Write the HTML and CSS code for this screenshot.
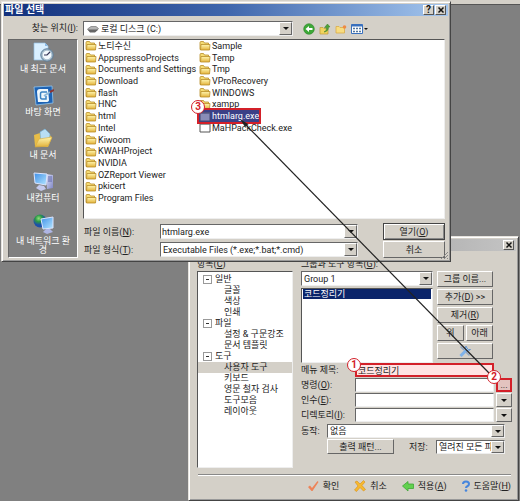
FILE: index.html
```html
<!DOCTYPE html>
<html lang="ko">
<head>
<meta charset="utf-8">
<title>파일 선택</title>
<link rel="stylesheet" href="styles.css">
</head>
<body>
<svg class="defs" aria-hidden="true">
  <defs>
    <linearGradient id="gold" x2="0" y2="1"><stop offset="0" stop-color="#fff6b0"/><stop offset="1" stop-color="#e3b23a"/></linearGradient>
    <linearGradient id="screen" x2="1" y2="1"><stop offset="0" stop-color="#3d8fe8"/><stop offset="1" stop-color="#b5e6ff"/></linearGradient>
    <linearGradient id="case" x2="1" y2="1"><stop offset="0" stop-color="#dfe3fb"/><stop offset="1" stop-color="#7f86c4"/></linearGradient>
    <radialGradient id="globe" cx=".4" cy=".3"><stop offset="0" stop-color="#8fe07a"/><stop offset=".5" stop-color="#2c9a45"/><stop offset="1" stop-color="#1c4fa8"/></radialGradient>
    <symbol id="folder" viewBox="0 0 12 11"><path d="M1 9.500V2.500Q1 1.500 2 1.500H4.500L5.500 3H9.500V9.500Z" fill="#f5dc74" stroke="#b98d28" stroke-width=".8"/><path d="M1.500 10L2 4.500H11L10.500 10Z" fill="url(#gold)" stroke="#b98d28" stroke-width=".8"/></symbol>
    <symbol id="app" viewBox="0 0 12 11"><path d="M1 1.500H11V10H1Z" fill="#fff" stroke="#555"/><path d="M1 2H11" stroke="#777" stroke-width="1.500"/></symbol>
  </defs>
</svg>
<main class="desktop">
  <div class="app-bar"></div>

  <section class="window options">
    <header class="titlebar inactive"><span></span><button class="cap" aria-label="닫기"><svg viewBox="0 0 8 8"><path d="M1.500 1.500L6.500 6.500M6.500 1.500L1.500 6.500"/></svg></button></header>
    <div class="options-body">
      <div class="categories">
        <div class="caption">항목(<u>C</u>)</div>
        <ul class="tree">
          <li class="branch">일반</li><li>글꼴</li><li>색상</li><li>인쇄</li>
          <li class="branch">파일</li><li>설정 &amp; 구문강조</li><li>문서 템플릿</li>
          <li class="branch">도구</li><li class="current">사용자 도구</li><li>키보드</li><li>영문 철자 검사</li><li>도구모음</li><li>레이아웃</li>
        </ul>
      </div>
      <div class="settings">
        <label class="caption" for="group">그룹과 도구 항목(<u>G</u>):</label>
        <div class="group-area">
          <div class="group-list">
            <div class="combo"><select id="group"><option>Group 1</option></select></div>
            <ul class="tools"><li>코드정리기</li></ul>
          </div>
          <div class="group-buttons">
            <button>그룹 이름...</button>
            <button>추가(<u>D</u>) &gt;&gt;</button>
            <button>제거(<u>R</u>)</button>
            <button class="half">위</button><button class="half">아래</button>
            <button aria-label="도구 설정"><svg class="wrench" viewBox="0 0 12 12"><path d="M1.500 11L7.500 5" stroke="#7fb2ea" stroke-width="3"/><path d="M7 1Q5 3.500 7 5.500Q9.500 7 11.500 4.500L9.500 4.500L8 3Z" fill="#a8cff5" stroke="#4c84c8" stroke-width=".7"/><path d="M1.500 1.500L5 5M7 7L10.500 10.500" stroke="#8fa6c2" stroke-width="1.500"/></svg></button>
          </div>
        </div>
        <div class="fields">
          <label for="menu">메뉴 제목:</label><input id="menu" class="marked" value="코드정리기">
          <label for="cmd">명령(<u>O</u>):</label><input id="cmd"><button class="marked-button" aria-label="명령 찾기">...</button>
          <label for="arg">인수(<u>E</u>):</label><input id="arg"><button class="drop" aria-label="인수 선택"></button>
          <label for="dir">디렉토리(<u>I</u>):</label><input id="dir"><button class="drop" aria-label="디렉토리 선택"></button>
        </div>
        <div class="line">
          <label for="action">동작:</label><div class="combo"><select id="action"><option>없음</option></select></div>
        </div>
        <div class="line output">
          <button>출력 패턴...</button><label for="save">저장:</label><div class="combo"><select id="save"><option>열려진 모든 파일</option></select></div>
        </div>
      </div>
    </div>
    <footer class="actions">
      <button><svg viewBox="0 0 12 12"><path d="M1 7L3 5.500L5 8L10.500 1L11.500 2L5.500 11H4.500Z" fill="#ee8358"/></svg><span>확인</span></button>
      <button><svg viewBox="0 0 12 12"><path d="M1 2L3 1L6 4L9.500 .500L11 2L8 5.500L11.500 9.500L9.500 11L6 7.500L2.500 11.500L.500 10L4 6Z" fill="#f6b92f" stroke="#d98d18" stroke-width=".6"/></svg><span>취소</span></button>
      <button><svg viewBox="0 0 12 12"><path d="M.500 6L6 1.500V4H11.500V8.500H6V11Z" fill="#62d14f" stroke="#3fa637" stroke-width=".8"/></svg><span>적용(<u>A</u>)</span></button>
      <button><svg class="narrow" viewBox="2 0 8 12"><path d="M3 4Q3 1.500 6 1.500T9 4Q9 5.500 7 6.500Q6 7 6 8" fill="none" stroke="#4786dd" stroke-width="2"/><circle cx="6" cy="10.500" r="1.300" fill="#4786dd"/></svg><span>도움말(<u>H</u>)</span></button>
    </footer>
  </section>

  <section class="window picker">
    <header class="titlebar"><span>파일 선택</span><button class="cap" aria-label="도움말">?</button><button class="cap" aria-label="닫기"><svg viewBox="0 0 8 8"><path d="M1.500 1.500L6.500 6.500M6.500 1.500L1.500 6.500"/></svg></button></header>
    <div class="picker-body">
      <label class="look-label" for="look">찾는 위치(<u>I</u>):</label>
      <div class="look">
        <div class="combo drive"><svg viewBox="0 0 12 8"><path d="M.500 4L4 1.500H9L11.500 3.500L8 6.500H3Z" fill="#b5b5b5" stroke="#777" stroke-width=".7"/><path d="M.500 4.500L3 7.500H8L11.500 4.500" fill="#666"/></svg><select id="look"><option>로컬 디스크 (C:)</option></select></div>
        <div class="nav">
          <button aria-label="뒤로"><svg viewBox="0 0 12 12"><circle cx="6" cy="6" r="5.300" fill="#3da837" stroke="#2c8528" stroke-width=".6"/><path d="M2.500 6L6 3V5H9.500V7H6V9Z" fill="#fff"/></svg></button>
          <button aria-label="한 수준 위로"><svg viewBox="0 0 12 12"><path d="M1 4.500H4L5 5.500H9V11H1Z" fill="#f1d45e" stroke="#c09a35" stroke-width=".7"/><path d="M5 9Q8 8 7.500 4.500H5.500L8.500 1L11 4H9.500Q9.500 8.500 5 9Z" fill="#4da336" stroke="#357a27" stroke-width=".5"/></svg></button>
          <button aria-label="새 폴더"><svg viewBox="0 0 12 12"><path d="M1 3.500H4L5 4.500H9.500V10H1Z" fill="#f8dc80" stroke="#d9ac48" stroke-width=".8"/><circle cx="9.500" cy="4" r="1.800" fill="#ee8b45"/></svg></button>
          <button class="view" aria-label="보기"><svg viewBox="0 0 12 12"><path d="M.500 1.500H11.500V10.500H.500Z" fill="#fff" stroke="#3a71bd"/><path d="M.500 2.500H11.500" stroke="#3a71bd" stroke-width="2"/><path d="M2 5.500H10M2 8.500H10" stroke="#54779d" stroke-width="1.500" stroke-dasharray="2 1"/></svg><i></i></button>
        </div>
      </div>
      <nav class="places">
        <a href="#"><svg viewBox="0 0 21 21"><path d="M1 1H12L15 4V18H1Z" fill="#d9efff" stroke="#94bfe2" stroke-width=".7"/><path d="M12 1V4H15" fill="#8ab9e5"/><circle cx="14" cy="13" r="6.200" fill="#a9bfce" stroke="#5c7c98"/><circle cx="14" cy="13" r="4.300" fill="#f3f9fd"/><path d="M17 10L14 13H11" fill="none" stroke="#335" stroke-width="1.200"/></svg>내 최근 문서</a>
        <a href="#"><svg viewBox="0 0 21 21"><path d="M1 2L19 1L20 18L3 20Z" fill="#1e63b4" stroke="#8fc3ec" stroke-width=".8"/><path d="M4 7Q4 4 7 4H15L16 15Q16 17 13 17H5Z" fill="#eef7fc"/><path d="M14 7H9Q7.500 7 7.500 9V12Q7.500 14 9 14H13V11" fill="none" stroke="#3a83c2" stroke-width="1.500"/><path d="M11 11L17 7" stroke="#8fb9d8" stroke-width="2"/><path d="M17 7L21 5" stroke="#8d3533" stroke-width="2"/></svg>바탕 화면</a>
        <a href="#"><svg viewBox="0 0 21 21"><path d="M2 18L1 7L7 5L9 8L17 7L19 10L15 19Z" fill="#e8bd47"/><path d="M7 4L12 1L17 6L16 14L8 15Z" fill="#b8def4" stroke="#6eabd2" stroke-width=".6"/><path d="M2 19L6 11L19 9L15 18Z" fill="url(#gold)" stroke="#d7a93c" stroke-width=".6"/></svg>내 문서</a>
        <a href="#"><svg viewBox="0 0 21 21"><path d="M13 3L20 4V17L14 18Z" fill="url(#case)"/><path d="M15 6H19M15 8H19M15 10H19" stroke="#5e67a8"/><path d="M1 2L14 3L13 14L2 12Z" fill="url(#screen)" stroke="#dbe5ff"/><path d="M6 14L11 15L13 18L8 20L3 17Z" fill="#c4c9ed"/></svg>내컴퓨터</a>
        <a href="#"><svg viewBox="0 0 21 21"><circle cx="7" cy="7" r="6.500" fill="url(#globe)"/><path d="M8 5L20 3V14L10 15Z" fill="url(#screen)" stroke="#dbe5ff"/><path d="M13 15H17L20 18L14 20L10 18Z" fill="#aeb5e4"/></svg>내 네트워크 환경</a>
      </nav>
      <div class="content">
        <ul class="files">
          <li><svg><use href="#folder"/></svg>노티수신</li>
          <li><svg><use href="#folder"/></svg>AppspressoProjects</li>
          <li><svg><use href="#folder"/></svg>Documents and Settings</li>
          <li><svg><use href="#folder"/></svg>Download</li>
          <li><svg><use href="#folder"/></svg>flash</li>
          <li><svg><use href="#folder"/></svg>HNC</li>
          <li><svg><use href="#folder"/></svg>html</li>
          <li><svg><use href="#folder"/></svg>Intel</li>
          <li><svg><use href="#folder"/></svg>Kiwoom</li>
          <li><svg><use href="#folder"/></svg>KWAHProject</li>
          <li><svg><use href="#folder"/></svg>NVIDIA</li>
          <li><svg><use href="#folder"/></svg>OZReport Viewer</li>
          <li><svg><use href="#folder"/></svg>pkicert</li>
          <li><svg><use href="#folder"/></svg>Program Files</li>
          <li><svg><use href="#folder"/></svg>Sample</li>
          <li><svg><use href="#folder"/></svg>Temp</li>
          <li><svg><use href="#folder"/></svg>Tmp</li>
          <li><svg><use href="#folder"/></svg>VProRecovery</li>
          <li><svg><use href="#folder"/></svg>WINDOWS</li>
          <li><svg><use href="#folder"/></svg>xampp</li>
          <li class="selected"><svg><use href="#app"/></svg><span>htmlarg.exe</span></li>
          <li><svg><use href="#app"/></svg>MaHPackCheck.exe</li>
        </ul>
        <div class="file-form">
          <label for="name">파일 이름(<u>N</u>):</label><div class="combo"><input id="name" value="htmlarg.exe"></div><button class="default">열기(<u>O</u>)</button>
          <label for="type">파일 형식(<u>T</u>):</label><div class="combo"><select id="type"><option>Executable Files (*.exe;*.bat;*.cmd)</option></select></div><button>취소</button>
        </div>
      </div>
    </div>
    <svg class="grip" viewBox="0 0 8 8"><path d="M1 8L8 1M4 8L8 4M7 8L8 7" stroke="#888"/></svg>
  </section>

  <svg class="pointer" viewBox="0 0 520 501" aria-hidden="true"><path d="M243 122L489 373" stroke="#222" stroke-width="1.200"/><path d="M240 119L248 124L245 127Z" fill="#222"/></svg>
  <span class="step one">1</span>
  <span class="step two">2</span>
  <span class="step three">3</span>
</main>
</body>
</html>
```

FILE: styles.css
```css
* { box-sizing: border-box; }
body {
  margin: 0;
  background: #808080;
  color: #222;
  font: 9px/12px Roboto, "Noto Sans CJK KR", sans-serif;
}
button, input, select { font: inherit; color: inherit; margin: 0; padding: 0; border-radius: 0; }
ul { list-style: none; margin: 0; padding: 0; }
.defs { position: absolute; width: 0; height: 0; }
.desktop { position: relative; min-height: 100vh; overflow: hidden; }
.app-bar { height: 5px; background: #d4d0c8; border-bottom: 1px solid #555; }

/* windows */
.window {
  position: absolute;
  isolation: isolate;
  background: #d4d0c8;
  border: 1px solid;
  border-color: #e6e3dd #444 #444 #e6e3dd;
  box-shadow: inset 1px 1px #fff, inset -1px -1px #999;
  padding: 2px;
}
.picker { left: 1px; top: 1px; width: 450px; }
.options { left: 188px; top: 236px; width: 331px; }
.titlebar {
  display: flex;
  align-items: center;
  height: 12px;
  padding: 0 2px 0 1px;
  color: #fff;
  font-size: 10px;
  font-weight: bold;
  background: linear-gradient(90deg, #12307c, #3f66ac 50%, #a4c6ee);
}
.titlebar span { flex: 1; }
.titlebar.inactive { background: linear-gradient(90deg, #808080, #c4c4c4); }
.cap {
  display: grid;
  place-items: center;
  width: 11px;
  height: 10px;
  margin-left: 1px;
  color: #111;
  font-weight: bold;
  line-height: 8px;
  background: #d4d0c8;
  border: 1px solid;
  border-color: #fff #555 #555 #fff;
}
.cap svg { width: 8px; height: 8px; stroke: #111; stroke-width: 1.5; }

/* controls */
.picker button, .options button { white-space: nowrap; }
.group-buttons button, .file-form button, .output button, .drop {
  background: #d4d0c8;
  border: 1px solid;
  border-color: #fff #666 #666 #fff;
}
input, .combo {
  background: #fff;
  border: 1px solid;
  border-color: #666 #eee #eee #666;
  min-width: 0;
}
input { padding: 0 1px; width: 100%; height: 100%; outline: 0; }
.combo { position: relative; display: flex; align-items: center; height: 15px; }
.combo input { border: 0; }
.combo select {
  appearance: none;
  flex: 1;
  min-width: 0;
  width: 100%;
  height: 100%;
  padding: 0 0 0 2px;
  border: 0;
  background: transparent;
}
.combo::before {
  content: "";
  position: absolute;
  z-index: 1;
  right: 0; top: 0; bottom: 0;
  width: 11px;
  background: #d4d0c8;
  border: 1px solid;
  border-color: #fff #666 #666 #fff;
  pointer-events: none;
}
.combo::after {
  content: "";
  position: absolute;
  z-index: 2;
  right: 3px; top: 5px;
  border: 3px solid transparent;
  border-top-color: #111;
  border-bottom: 0;
  pointer-events: none;
}

/* file picker */
.picker-body {
  display: grid;
  grid-template-columns: 70px 1fr;
  column-gap: 5px;
  padding: 5px 3px 1px 4px;
}
.look-label { text-align: right; line-height: 15px; }
.look { display: flex; margin-bottom: 3px; }
.drive { width: 210px; padding-left: 3px; }
.drive svg { width: 12px; height: 8px; flex: none; }
.nav { display: flex; margin-left: 8px; }
.nav button { display: flex; align-items: center; justify-content: center; width: 16px; border: 0; background: none; }
.nav svg { width: 12px; height: 12px; flex: none; }
.nav .view { width: 20px; }
.view i { border: 2px solid transparent; border-top-color: #111; border-bottom: 0; margin-left: 1px; }
.places {
  display: flex;
  flex-direction: column;
  gap: 11px;
  padding: 2px 4px 0;
  background: #808080;
  border: 1px solid;
  border-color: #666 #fff #fff #666;
}
.places a { display: block; color: #fff; text-decoration: none; text-align: center; line-height: 9px; word-break: break-all; }
.places svg { display: block; width: 21px; height: 21px; margin: 0 auto 2px; }
.files {
  display: grid;
  grid-template-rows: repeat(14, 1fr);
  grid-template-columns: 114px 1fr;
  grid-auto-flow: column;
  height: 180px;
  padding: 0 0 14px 1px;
  background: #fff;
  border: 1px solid;
  border-color: #555 #eee #eee #555;
}
.files li { display: flex; align-items: center; gap: 1px; min-height: 0; white-space: nowrap; }
.files svg { width: 12px; height: 11px; flex: none; }
.files .selected { position: relative; justify-self: start; background: #3b4087; color: #fff; z-index: 1; outline: 2px solid #d32029; }
.selected svg { opacity: .4; }
.file-form {
  display: grid;
  grid-template-columns: 77px 1fr 62px;
  grid-auto-rows: 17px;
  align-items: center;
  margin-top: 4px;
  row-gap: 1px;
}
.file-form label { padding-left: 1px; }
.file-form .combo { margin-right: 25px; }
.file-form button { height: 17px; }
.file-form .default { border-color: #444; box-shadow: inset 1px 1px #fff, inset -1px -1px #888; }
.grip { position: absolute; right: 2px; bottom: 2px; width: 8px; height: 8px; }

/* tool options */
.options-body { display: flex; gap: 8px; padding: 7px 4px 6px 6px; }
.categories { flex: none; width: 96px; }
.caption { display: block; height: 13px; }
.tree {
  height: 197px;
  padding: 2px 0;
  line-height: 11px;
  background: #fff;
  border: 1px solid;
  border-color: #555 #eee #eee #555;
}
.tree li { padding-left: 26px; white-space: nowrap; }
.tree .branch { display: flex; align-items: center; gap: 3px; padding-left: 5px; }
.branch::before {
  content: "";
  width: 7px;
  height: 7px;
  border: 1px solid #999;
  background: linear-gradient(#333, #333) center / 3px 1px no-repeat;
}
.tree .current { background: #d4d0c8; }
.settings { flex: 1; min-width: 0; }
.group-area { display: flex; gap: 4px; }
.group-list { display: flex; flex-direction: column; gap: 2px; width: 132px; }
.tools { flex: 1; padding: 0 1px; background: #fff; border: 1px solid; border-color: #555 #eee #eee #555; }
.tools li { height: 10px; line-height: 10px; padding-left: 1px; background: #0a246a; color: #fff; }
.group-buttons { display: grid; grid-template-columns: 27px 27px; grid-auto-rows: 16px; gap: 2px; margin-bottom: 4px; }
.group-buttons button { grid-column: span 2; }
.group-buttons .half { grid-column: span 1; }
.wrench { display: block; width: 12px; height: 12px; margin: auto; }
.fields {
  display: grid;
  grid-template-columns: 52px 1fr 16px;
  grid-auto-rows: 14px;
  gap: 1px 2px;
  align-items: center;
}
.fields label { grid-column: 1; white-space: nowrap; }
.fields .marked { border: 2px solid #d32029; background: #ffe3e3; }
.marked-button { height: 100%; border: 2px solid #d32029; background: #e3c3bf; line-height: 8px; }
.drop { height: 100%; display: grid; place-items: center; }
.drop::after { content: ""; border: 3px solid transparent; border-top-color: #111; border-bottom: 0; }
.line { display: flex; align-items: center; margin: 2px 7px 0 0; }
.line label { width: 26px; }
.line .combo { flex: 1; height: 14px; }
.output { margin-top: 1px; padding-left: 26px; }
.output button { width: 67px; height: 15px; }
.output label { margin-left: 15px; width: 27px; }
.output .combo { flex: 1; }
.actions {
  display: flex;
  justify-content: flex-end;
  gap: 15px;
  margin: 0 5px 0 7px;
  padding: 4px 0 5px;
  border-top: 1px solid #888;
  box-shadow: inset 0 1px #fff;
}
.actions button { display: flex; align-items: center; gap: 4px; height: 14px; border: 0; background: none; }
.actions svg { width: 12px; height: 12px; }
.actions .narrow { width: 8px; }

/* numbered walkthrough marks */
.pointer { position: absolute; left: 0; top: 0; width: 520px; height: 501px; pointer-events: none; }
.step {
  position: absolute;
  width: 14px;
  height: 14px;
  border: 1px solid #d32029;
  border-radius: 50%;
  background: #fff;
  color: #d32029;
  font-size: 10px;
  font-weight: bold;
  line-height: 12px;
  text-align: center;
}
.one { left: 347px; top: 358px; }
.two { left: 487px; top: 370px; }
.three { left: 191px; top: 100px; }
```
